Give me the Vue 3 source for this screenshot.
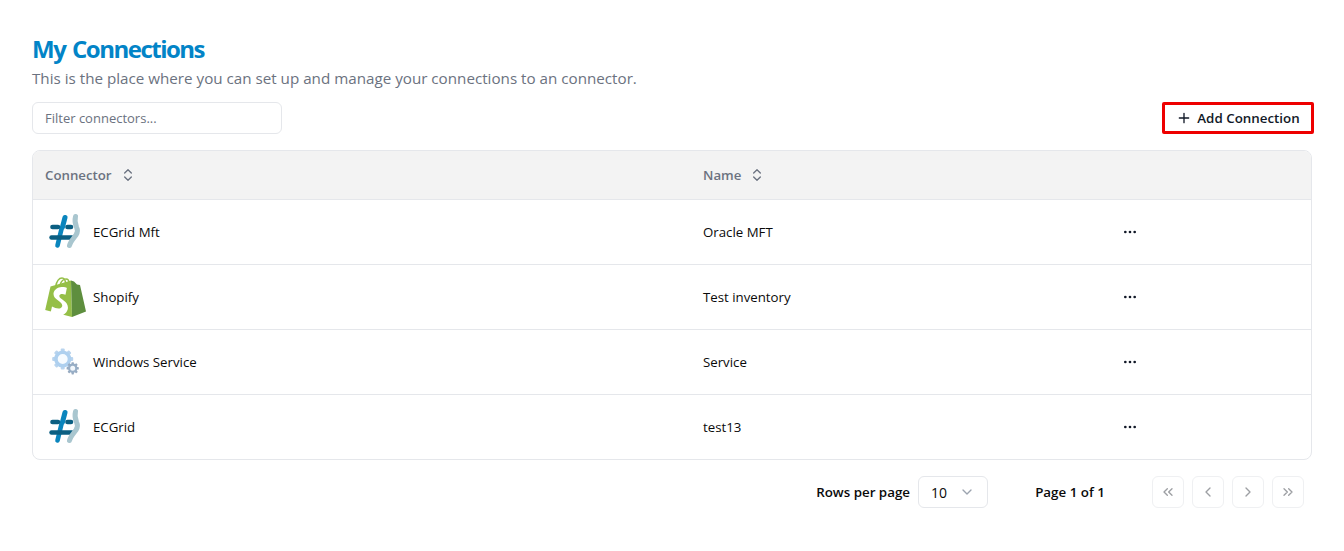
<script setup>
const rows = [
  { connector: 'ECGrid Mft', name: 'Oracle MFT', icon: 'ecgrid' },
  { connector: 'Shopify', name: 'Test inventory', icon: 'shopify' },
  { connector: 'Windows Service', name: 'Service', icon: 'gear' },
  { connector: 'ECGrid', name: 'test13', icon: 'ecgrid' },
]
const gearTeeth = [0, 45, 90, 135, 180, 225, 270, 315]
</script>

<template>
  <div class="page">
    <h1 class="title">My Connections</h1>
    <p class="subtitle">This is the place where you can set up and manage your connections to an connector.</p>

    <div class="toolbar">
      <input class="filter" placeholder="Filter connectors..." />
      <button class="add">
        <svg width="16" height="16" viewBox="0 0 24 24" fill="none" stroke="currentColor" stroke-width="2" stroke-linecap="round"><path d="M5 12h14M12 5v14" /></svg>
        Add Connection
      </button>
    </div>

    <div class="table">
      <div class="row head">
        <div class="cell sort">
          Connector
          <svg width="16" height="16" viewBox="0 0 24 24" fill="none" stroke="currentColor" stroke-width="2" stroke-linecap="round" stroke-linejoin="round"><path d="m7 15 5 5 5-5M7 9l5-5 5 5" /></svg>
        </div>
        <div class="cell sort">
          Name
          <svg width="16" height="16" viewBox="0 0 24 24" fill="none" stroke="currentColor" stroke-width="2" stroke-linecap="round" stroke-linejoin="round"><path d="m7 15 5 5 5-5M7 9l5-5 5 5" /></svg>
        </div>
        <div class="cell"></div>
      </div>

      <div v-for="r in rows" :key="r.name" class="row body">
        <div class="cell conn">
          <svg v-if="r.icon === 'ecgrid'" class="logo" viewBox="0 0 40 40">
            <g transform="translate(-1 0)">
              <path d="M21 5.500 18.500 15" stroke="#0a85bd" stroke-width="5" stroke-linecap="round" fill="none" />
              <path d="M17.500 17 13.500 33.500" stroke="#0a85bd" stroke-width="4.600" stroke-linecap="round" fill="none" />
              <path d="M8.500 15h5.500" stroke="#0b5f82" stroke-width="4.600" stroke-linecap="round" fill="none" />
              <path d="M23.500 15h3.500" stroke="#0b5f82" stroke-width="4.600" stroke-linecap="round" fill="none" />
              <path d="M7.500 25.500h20.500" stroke="#0b5f82" stroke-width="4.400" stroke-linecap="round" fill="none" />
              <path d="M31.500 4.500c-1 4-.5 7 1 10.500 1.500 3 1.500 5-.5 8-2.500 3.500-5.500 6.500-6.500 10.500" stroke="#a9c6cf" stroke-width="5" stroke-linecap="round" fill="none" />
            </g>
          </svg>
          <svg v-else-if="r.icon === 'shopify'" class="logo" viewBox="0 0 40 40">
            <path d="M.2 33 5.500 9.500 26 3.500 27 40z" fill="#95bf47" />
            <path d="M26 3.500 29 4.500 32 7.500 35 8 41 34.500 27 40z" fill="#5e8e3e" />
            <path d="M10.500 10c1-5 3.500-9 6.500-9 2.500 0 3.500 2.500 3.500 6M15 8c1-3 3-6 6-6 2 0 3 2 3 4" fill="none" stroke="#95bf47" stroke-width="1.500" />
            <path transform="translate(14 24) scale(1.75) translate(-18 -23)" d="M22.500 15.500c-1.500-.8-6-1-7.500 2.500-1.200 4.500 5.500 5 4.800 8-.6 2-3.500 1.500-5.800.2L13 30.500c3 1.500 8.500 2 10-2.800 1-4.700-5.200-5.500-4.800-7.700.2-1.200 2-1.200 3.500-.6z" fill="#fff" />
          </svg>
          <svg v-else class="logo" viewBox="0 0 40 40">
            <g fill="#b9d4ee">
              <rect v-for="a in gearTeeth" :key="a" x="15.700" y="6.500" width="4" height="4" rx="1" :transform="`rotate(${a} 17.700 17)`" />
            </g>
            <circle cx="17.700" cy="17" r="6.800" fill="#f6fbff" stroke="#aed0ef" stroke-width="3.600" />
            <g fill="#97aac0">
              <rect v-for="a in gearTeeth" :key="a" x="26.500" y="20.200" width="2.400" height="3" rx=".6" :transform="`rotate(${a} 27.700 26.300)`" />
            </g>
            <circle cx="27.700" cy="26.300" r="3.600" fill="#f2f7fc" stroke="#97aec6" stroke-width="2.200" />
          </svg>
          <span>{{ r.connector }}</span>
        </div>
        <div class="cell">{{ r.name }}</div>
        <div class="cell">
          <button class="dots">
            <svg width="16" height="16" viewBox="0 0 24 24" fill="currentColor"><circle cx="5" cy="12" r="2" /><circle cx="12" cy="12" r="2" /><circle cx="19" cy="12" r="2" /></svg>
          </button>
        </div>
      </div>
    </div>

    <div class="pager">
      <span class="rpp">Rows per page</span>
      <div class="select">
        <span>10</span>
        <svg width="16" height="16" viewBox="0 0 24 24" fill="none" stroke="currentColor" stroke-width="2" stroke-linecap="round" stroke-linejoin="round"><path d="m6 9 6 6 6-6" /></svg>
      </div>
      <span class="pageinfo">Page 1 of 1</span>
      <div class="pagebtns">
        <button class="pb"><svg width="16" height="16" viewBox="0 0 24 24" fill="none" stroke="currentColor" stroke-width="2" stroke-linecap="round" stroke-linejoin="round"><path d="m11 17-5-5 5-5M18 17l-5-5 5-5" /></svg></button>
        <button class="pb"><svg width="16" height="16" viewBox="0 0 24 24" fill="none" stroke="currentColor" stroke-width="2" stroke-linecap="round" stroke-linejoin="round"><path d="m15 18-6-6 6-6" /></svg></button>
        <button class="pb"><svg width="16" height="16" viewBox="0 0 24 24" fill="none" stroke="currentColor" stroke-width="2" stroke-linecap="round" stroke-linejoin="round"><path d="m9 18 6-6-6-6" /></svg></button>
        <button class="pb"><svg width="16" height="16" viewBox="0 0 24 24" fill="none" stroke="currentColor" stroke-width="2" stroke-linecap="round" stroke-linejoin="round"><path d="m6 17 5-5-5-5M13 17l5-5-5-5" /></svg></button>
      </div>
    </div>
  </div>
</template>

<style scoped>
.page {
  width: 1344px;
  height: 551px;
  box-sizing: border-box;
  padding: 32px 32px 0;
  font-family: "Open Sans", "Noto Sans", sans-serif;
  color: #0a0a0a;
  background: #fff;
  overflow: hidden;
}
.title {
  margin: 0;
  font-size: 24px;
  line-height: 34px;
  font-weight: 700;
  letter-spacing: -1.5px;
  word-spacing: 2px;
  color: #0284c7;
}
.subtitle {
  margin: 0;
  font-size: 15.2px;
  line-height: 24px;
  color: #6b7280;
}
.toolbar {
  display: flex;
  align-items: center;
  justify-content: space-between;
  margin-top: 12px;
}
.filter {
  box-sizing: border-box;
  width: 250px;
  height: 32px;
  padding: 0 12px;
  border: 1px solid #e5e7eb;
  border-radius: 6px;
  font: inherit;
  font-size: 13px;
  outline: none;
}
.filter::placeholder { color: #6b7280; opacity: 1; }
.add {
  box-sizing: border-box;
  display: flex;
  align-items: center;
  justify-content: center;
  gap: 5px;
  width: 152px;
  height: 32px;
  margin-right: -2px;
  border: 3px solid #ee0000;
  border-radius: 2px;
  background: #fff;
  font: inherit;
  font-size: 13.35px;
  font-weight: 600;
  color: #111827;
  padding: 0;
}
.table {
  margin-top: 16px;
  border: 1px solid #e5e7eb;
  border-radius: 8px;
  overflow: hidden;
  font-size: 13.25px;
}
.row {
  display: grid;
  grid-template-columns: 658px 419px 1fr;
  align-items: center;
}
.cell { padding: 0 12px; min-width: 0; }
.head {
  height: 49px;
  background: #f3f3f3;
  border-bottom: 1px solid #e5e7eb;
  box-sizing: border-box;
  color: #6b7280;
  font-weight: 600;
}
.sort { display: flex; align-items: center; gap: 8px; }
.body { height: 65px; box-sizing: border-box; border-bottom: 1px solid #e5e7eb; }
.body:last-child { border-bottom: 0; height: 64px; }
.conn { display: flex; align-items: center; gap: 8px; }
.logo { width: 40px; height: 40px; flex: none; overflow: visible; filter: blur(0.3px); }
.dots {
  display: flex;
  padding: 0;
  border: 0;
  background: none;
  color: #111827;
}
.pager {
  display: flex;
  align-items: center;
  margin-top: 16px;
  padding-right: 8px;
  justify-content: flex-end;
  font-size: 13.35px;
  font-weight: 600;
}
.rpp { margin-right: 8px; }
.select {
  box-sizing: border-box;
  width: 70px;
  height: 32px;
  display: flex;
  align-items: center;
  justify-content: space-between;
  padding: 0 12px;
  border: 1px solid #e5e7eb;
  border-radius: 6px;
  font-weight: 400;
  font-size: 14px;
}
.select svg { color: #9ca3af; }
.pageinfo { width: 100px; margin: 0 32px; text-align: center; }
.pagebtns { display: flex; gap: 8px; }
.pb {
  box-sizing: border-box;
  width: 32px;
  height: 32px;
  display: flex;
  align-items: center;
  justify-content: center;
  padding: 0;
  border: 1px solid #eff0f2;
  border-radius: 6px;
  background: #fff;
  color: #9d9fa3;
}
</style>
